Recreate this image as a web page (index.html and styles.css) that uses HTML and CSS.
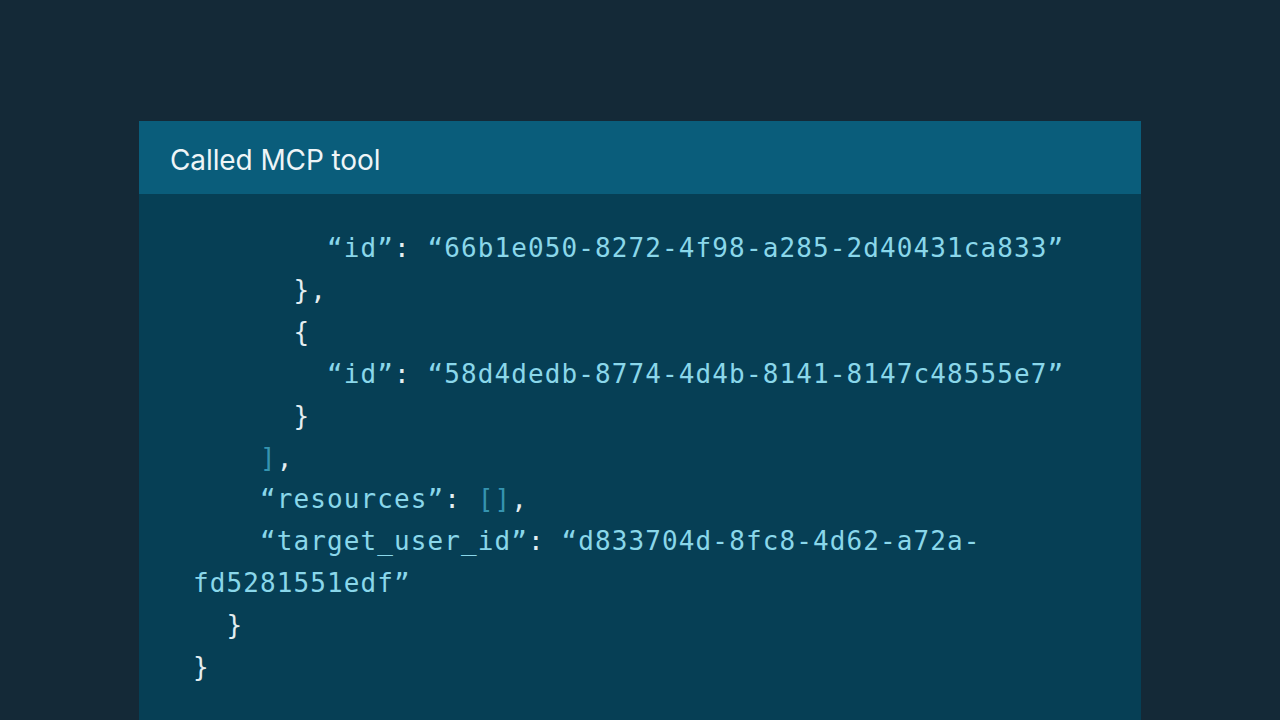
FILE: index.html
```html
<!DOCTYPE html>
<html lang="en">
<head>
<meta charset="utf-8">
<title>Called MCP tool</title>
<link rel="stylesheet" href="styles.css">
</head>
<body>
<main class="stage">
  <section class="panel">
    <header class="panel-head">Called MCP tool</header>
    <pre class="code"><span class="p">        </span><span class="s">“id”</span><span class="p">: </span><span class="s">“66b1e050-8272-4f98-a285-2d40431ca833”</span>
<span class="p">      },</span>
<span class="p">      {</span>
<span class="p">        </span><span class="s">“id”</span><span class="p">: </span><span class="s">“58d4dedb-8774-4d4b-8141-8147c48555e7”</span>
<span class="p">      }</span>
<span class="p">    </span><span class="b">]</span><span class="p">,</span>
<span class="p">    </span><span class="s">“resources”</span><span class="p">: </span><span class="b">[]</span><span class="p">,</span>
<span class="p">    </span><span class="s">“target_user_id”</span><span class="p">: </span><span class="s">“d833704d-8fc8-4d62-a72a-fd5281551edf”</span>
<span class="p">  }</span>
<span class="p">}</span></pre>
  </section>
</main>
</body>
</html>
```

FILE: styles.css
```css
html, body {
  margin: 0;
  padding: 0;
  height: 100%;
  background: #142937;
  overflow: hidden;
}

.stage {
  padding-top: 121px;
  padding-left: 139px;
  height: 100%;
  box-sizing: border-box;
}

.panel {
  width: 1002px;
  height: 100%;
  background: #063f55;
  display: flex;
  flex-direction: column;
}

.panel-head {
  height: 73px;
  background: #0a5d7b;
  color: #eef5f7;
  font-family: Inter, "Liberation Sans", sans-serif;
  font-size: 28px;
  letter-spacing: -0.1px;
  line-height: 73px;
  padding-left: 31px;
  padding-top: 3px;
  box-sizing: border-box;
}

.code {
  margin: 0;
  padding: 34px 72px 0 54px;
  font-family: "DejaVu Sans Mono", "Liberation Mono", monospace;
  font-size: 26px;
  letter-spacing: 1.1px;
  line-height: 41.9px;
  white-space: pre-wrap;
  color: #e4eef1;
}

.s { color: #8ad7ea; }
.p { color: #e4eef1; }
.b { color: #3594b0; }
```
